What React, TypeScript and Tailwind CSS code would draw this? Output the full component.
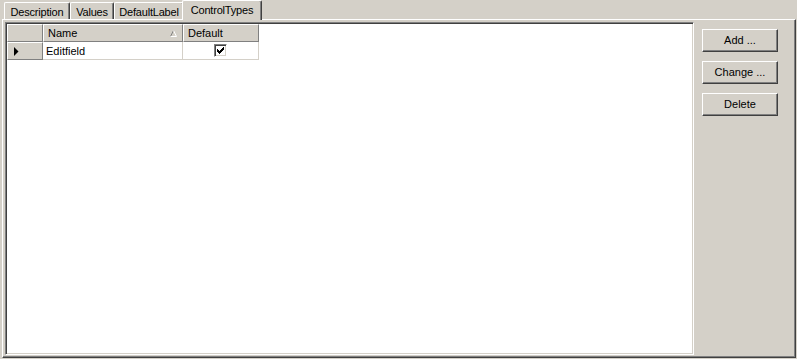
import React from "react";

const tabs = [
  { name: "Description", w: "w-[66px]" },
  { name: "Values", w: "w-[44px]" },
  { name: "DefaultLabel", w: "w-[70px]" },
];

function SortGlyph() {
  return (
    <svg width="7" height="7" viewBox="0 0 7 7" className="shrink-0">
      <path d="M3.5 0.5 L0.5 6.5" stroke="#808080" strokeWidth="1" fill="none" />
      <path d="M3.5 0.5 L6.5 6.5 L0.5 6.5" stroke="#ffffff" strokeWidth="1" fill="none" />
    </svg>
  );
}

function CheckBox() {
  const cols = [2, 3, 4, 3, 2, 1, 0];
  return (
    <div className="w-[13px] h-[13px] border border-t-[#808080] border-l-[#808080] border-r-white border-b-white shadow-[inset_1px_1px_0_#404040,inset_-1px_-1px_0_#d4d0c8] bg-white flex items-center justify-center">
      <svg width="7" height="7" viewBox="0 0 7 7">
        {cols.map((y, x) => (
          <rect key={x} x={x} y={y} width="1" height="3" fill="#000" />
        ))}
      </svg>
    </div>
  );
}

function Button({ label }: { label: string }) {
  return (
    <button className="w-[76px] h-[23px] bg-[#d4d0c8] border border-t-white border-l-white border-r-[#404040] border-b-[#404040] shadow-[inset_-1px_-1px_0_#808080] flex items-center justify-center text-[11px] text-black">
      {label}
    </button>
  );
}

export default function App() {
  return (
    <div className="w-[797px] h-[359px] bg-[#d4d0c8] pl-[2px] flex flex-col font-['Liberation_Sans',Arial,sans-serif] text-[11px] text-black overflow-hidden">
      {/* Tabs */}
      <div className="h-[20px] flex items-end pl-[2px] tracking-[-0.2px]">
        {tabs.map((t) => (
          <div
            key={t.name}
            className={`${t.w} h-[17px] mb-[1px] border-l border-t border-white border-r border-r-[#404040] shadow-[inset_-1px_0_0_#808080] rounded-t-[2px] flex items-center justify-center pt-[2px]`}
          >
            {t.name}
          </div>
        ))}
        <div className="relative z-10 -ml-[2px] w-[80px] h-[20px] bg-[#d4d0c8] border-l border-t border-white border-r border-r-[#404040] shadow-[inset_-1px_0_0_#808080] rounded-t-[2px] flex items-center justify-center pb-[1px]">
          ControlTypes
        </div>
      </div>

      {/* Panel */}
      <div className="-mt-[1px] w-[794px] h-[339px] border border-t-white border-l-white border-r-[#404040] border-b-[#404040] shadow-[inset_-1px_-1px_0_#808080] flex pt-[2px] pl-[2px] pb-[2px]">
        {/* Grid */}
        <div className="w-[689px] h-[333px] border border-t-[#808080] border-l-[#808080] border-r-white border-b-white shadow-[inset_1px_1px_0_#404040,inset_-1px_-1px_0_#d4d0c8] p-[1px]">
          <div className="w-full h-full bg-white">
            <div className="flex h-[18px]">
              <div className="w-[36px] bg-[#d4d0c8] border-l border-t border-white border-r border-b border-r-[#808080] border-b-[#808080]" />
              <div className="w-[140px] bg-[#d4d0c8] border-l border-t border-white border-r border-b border-r-[#808080] border-b-[#808080] flex items-center pl-[4px] pr-[5px]">
                <span className="flex-1">Name</span>
                <SortGlyph />
              </div>
              <div className="w-[76px] bg-[#d4d0c8] border-l border-t border-white border-r border-b border-r-[#808080] border-b-[#808080] flex items-center pl-[4px]">
                Default
              </div>
            </div>
            <div className="flex h-[18px]">
              <div className="w-[36px] bg-[#d4d0c8] border-l border-t border-white border-r border-b border-r-[#808080] border-b-[#808080] flex items-center pl-[6px]">
                <svg width="5" height="9" viewBox="0 0 5 9">
                  <polygon points="0,0 4.5,4.5 0,9" fill="#000" />
                </svg>
              </div>
              <div className="w-[140px] border-r border-b border-[#d4d0c8] flex items-center pl-[3px] pt-[1px]">
                Editfield
              </div>
              <div className="w-[76px] border-r border-b border-[#d4d0c8] flex items-center justify-center pr-[1px]">
                <CheckBox />
              </div>
            </div>
          </div>
        </div>

        {/* Buttons */}
        <div className="ml-[8px] pt-[7px] flex flex-col gap-[9px]">
          <Button label="Add ..." />
          <Button label="Change ..." />
          <Button label="Delete" />
        </div>
      </div>
    </div>
  );
}
